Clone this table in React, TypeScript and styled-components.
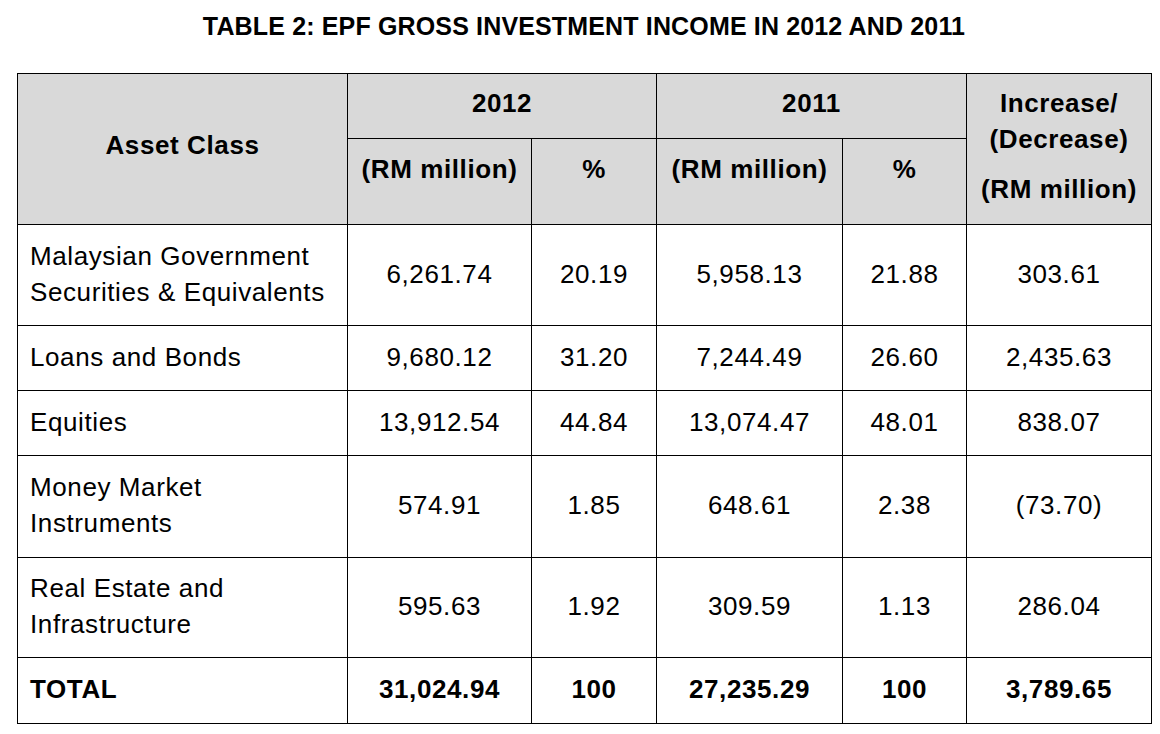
import React from "react";
import styled, { createGlobalStyle } from "styled-components";

const Global = createGlobalStyle`
  html, body { margin: 0; padding: 0; background: #ffffff; }
  body { font-family: "Liberation Sans", Arial, sans-serif; color: #000; }
`;

const Page = styled.div`
  width: 1160px;
  height: 734px;
  box-sizing: border-box;
  padding: 11px 0 0 17px;
`;

const Title = styled.h1`
  width: 1134px;
  margin: 0;
  font-size: 25px;
  letter-spacing: 0.15px;
  line-height: 30px;
  font-weight: 700;
  text-align: center;
`;

const Table = styled.table`
  margin-top: 32px;
  width: 1134px;
  border-collapse: collapse;
  table-layout: fixed;
  font-size: 26px;
  letter-spacing: 0.6px;
  line-height: 36px;
`;

const Row = styled.tr<{ $h: number }>`
  height: ${(p) => p.$h}px;
`;

const Head = styled.th<{ $pt?: number; $pb?: number; $top?: boolean }>`
  background: #d9d9d9;
  border: 1px solid #000;
  font-weight: 700;
  text-align: center;
  vertical-align: ${(p) => (p.$top ? "top" : "middle")};
  padding: ${(p) => p.$pt ?? 0}px 0 ${(p) => p.$pb ?? 0}px 0;
`;

const Gap = styled.span`
  display: block;
  height: 14px;
`;

const Cell = styled.td<{ $label?: boolean; $bold?: boolean }>`
  border: 1px solid #000;
  padding: 0 0 3px ${(p) => (p.$label ? "12px" : "0")};
  text-align: ${(p) => (p.$label ? "left" : "center")};
  vertical-align: middle;
  font-weight: ${(p) => (p.$bold ? 700 : 400)};
`;

const rows = [
  { label: ["Malaysian Government", "Securities & Equivalents"], v: ["6,261.74", "20.19", "5,958.13", "21.88", "303.61"], h: 101 },
  { label: ["Loans and Bonds"], v: ["9,680.12", "31.20", "7,244.49", "26.60", "2,435.63"], h: 65 },
  { label: ["Equities"], v: ["13,912.54", "44.84", "13,074.47", "48.01", "838.07"], h: 65 },
  { label: ["Money Market", "Instruments"], v: ["574.91", "1.85", "648.61", "2.38", "(73.70)"], h: 102 },
  { label: ["Real Estate and", "Infrastructure"], v: ["595.63", "1.92", "309.59", "1.13", "286.04"], h: 100 },
];

export default function App() {
  return (
    <Page>
      <Global />
      <Title>TABLE 2: EPF GROSS INVESTMENT INCOME IN 2012 AND 2011</Title>
      <Table>
        <colgroup>
          <col style={{ width: 330 }} />
          <col style={{ width: 184 }} />
          <col style={{ width: 125 }} />
          <col style={{ width: 186 }} />
          <col style={{ width: 124 }} />
          <col style={{ width: 185 }} />
        </colgroup>
        <thead>
          <Row $h={65}>
            <Head rowSpan={2} $pb={8}>Asset Class</Head>
            <Head colSpan={2} $pb={6}>2012</Head>
            <Head colSpan={2} $pb={6}>2011</Head>
            <Head rowSpan={2} $top $pt={11}>
              Increase/
              <br />
              (Decrease)
              <Gap />
              (RM million)
            </Head>
          </Row>
          <Row $h={86}>
            <Head $top $pt={12}>(RM million)</Head>
            <Head $top $pt={12}>%</Head>
            <Head $top $pt={12}>(RM million)</Head>
            <Head $top $pt={12}>%</Head>
          </Row>
        </thead>
        <tbody>
          {rows.map((r) => (
            <Row key={r.label.join(" ")} $h={r.h}>
              <Cell $label>
                {r.label.map((l, i) => (
                  <React.Fragment key={l}>
                    {i > 0 && <br />}
                    {l}
                  </React.Fragment>
                ))}
              </Cell>
              {r.v.map((v, i) => (
                <Cell key={i}>{v}</Cell>
              ))}
            </Row>
          ))}
          <Row $h={66}>
            <Cell $label $bold>TOTAL</Cell>
            <Cell $bold>31,024.94</Cell>
            <Cell $bold>100</Cell>
            <Cell $bold>27,235.29</Cell>
            <Cell $bold>100</Cell>
            <Cell $bold>3,789.65</Cell>
          </Row>
        </tbody>
      </Table>
    </Page>
  );
}
